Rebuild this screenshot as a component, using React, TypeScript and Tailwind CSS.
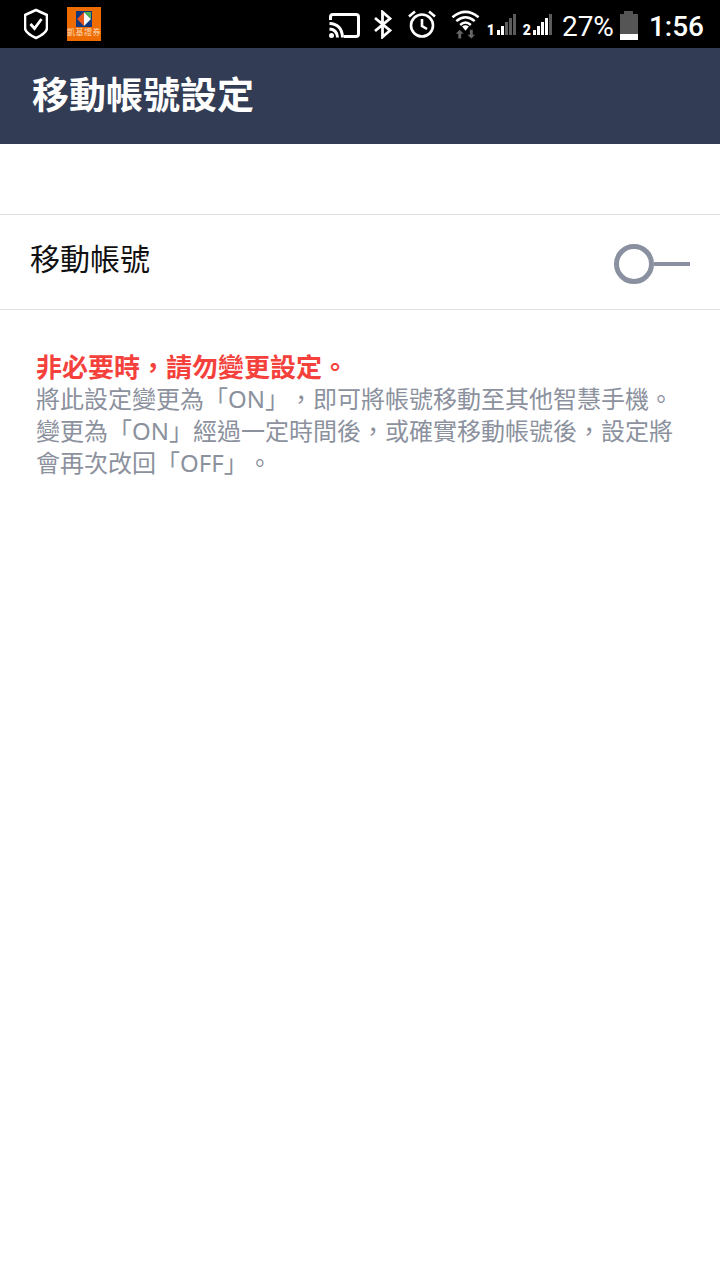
const cjk = 'font-["Roboto","Noto_Sans_CJK_TC",sans-serif] [text-spacing-trim:space-all]';

// Signal strength: digit plus a stepped wedge of thin bars
function Signal({ digit, lit }: { digit: string; lit: number }) {
  const bars = [5, 9, 13, 17, 21];
  return (
    <div className="flex h-[21px] items-end">
      <span className="mr-[2px] text-[14px] leading-[10px] font-black text-white font-['Roboto',sans-serif]">{digit}</span>
      <svg width="19" height="21" viewBox="0 0 19 21">
        {bars.map((h, i) => (
          <rect key={i} x={i * 4} y={21 - h} width="3" height={h} fill={i < lit ? '#ffffff' : '#5c5c5c'} />
        ))}
      </svg>
    </div>
  );
}

function StatusBar() {
  return (
    <div className="flex h-[48px] items-center justify-between bg-black pl-[24px] pr-[16px]">
      <div className="flex items-center gap-[19px]">
        <svg width="24" height="32" viewBox="0 0 24 32" fill="none" stroke="white" strokeWidth="2.6">
          <path d="M12 2 L23 7 V20 Q23 25 12 30 Q1 25 1 20 V7 Z" strokeLinejoin="round" />
          <path d="M6.5 16 L10.5 20.5 L17.5 11" strokeWidth="2.8" />
        </svg>
        <div className="flex h-[34px] w-[34px] flex-col items-center overflow-hidden bg-[#ee6c00] pt-[4px]">
          <svg width="16" height="16" viewBox="0 0 16 16">
            <rect width="16" height="16" fill="#14377d" />
            <path d="M8 1 L15 8 L8 15 Z" fill="#f5f5f5" />
            <path d="M8 1 L15 1 L15 8 Z" fill="#4caf50" />
            <path d="M1 8 L8 1 V15 Z" fill="#e8571c" />
          </svg>
          <span className={`${cjk} mt-[1px] text-[8px] leading-[10px] tracking-[0.5px] whitespace-nowrap text-[#ffd9b8]`}>凱基證券</span>
        </div>
      </div>
      <div className="flex items-center">
        <svg className="mt-[2px] mr-[14px]" width="31" height="25" viewBox="0 0 31 25" fill="none" stroke="white" strokeWidth="3">
          <path d="M1.500 7 V4 Q1.500 1.500 4 1.500 H27 Q29.500 1.500 29.500 4 V21 Q29.500 23.500 27 23.500 H15" />
          <path d="M0.500 10.500 Q13 11 13.500 24.500 M0.500 16 Q8 16.500 8.500 24.500" />
          <circle cx="2.500" cy="22.500" r="2.500" fill="white" stroke="none" />
        </svg>
        <svg className="mr-[15px]" width="18" height="29" viewBox="0 0 18 29" fill="none" stroke="white" strokeWidth="2.8">
          <path d="M1 8 L16 20.500 L8.500 27 V2 L16 8.500 L1 21" />
        </svg>
        <svg className="mr-[14px]" width="30" height="30" viewBox="0 0 30 30" fill="none" stroke="white" strokeWidth="2.6">
          <circle cx="15" cy="16.500" r="11" />
          <path d="M15 10 V17 L20 20" />
          <path d="M2 7.500 L8 2.500 M28 7.500 L22 2.500" />
        </svg>
        <svg className="mr-[7px]" width="29" height="30" viewBox="0 0 30 30" fill="none">
          <path d="M1.500 8 Q15 -3 28.500 8 M5.500 12 Q15 4 24.500 12 M9.500 16 Q15 11 20.500 16" stroke="white" strokeWidth="2.600" />
          <path d="M15 22 L11.500 17.500 Q15 15 18.500 17.500 Z" fill="white" />
          <path d="M9 21 L13 25 H10.500 V30 H7.500 V25 H5 Z" fill="#666666" />
          <path d="M21 30 L17 26 H19.500 V21 H22.500 V26 H25 Z" fill="#666666" />
        </svg>
        <div className="mr-[7px]"><Signal digit="1" lit={2} /></div>
        <Signal digit="2" lit={4} />
        <span className="mt-[6px] ml-[10px] text-[28px] leading-[32px] text-white font-['Roboto',sans-serif]">27%</span>
        <div className="mt-[2px] ml-[6px] flex h-[29px] w-[18px] flex-col">
          <div className="mx-auto h-[3px] w-[9px] bg-[#555555]" />
          <div className="flex-1 bg-[#555555]" />
          <div className="h-[6px] bg-white" />
        </div>
        <span className="mt-[6px] ml-[11px] text-[28px] leading-[32px] font-medium text-white font-['Roboto',sans-serif]">1:56</span>
      </div>
    </div>
  );
}

export default function App() {
  const notice = [
    '將此設定變更為「ON」，即可將帳號移動至其他智慧手機。',
    '變更為「ON」經過一定時間後，或確實移動帳號後，設定將',
    '會再次改回「OFF」。',
  ];

  return (
    <div className={`${cjk} flex h-[1280px] w-[720px] flex-col bg-white`}>
      <StatusBar />
      <div className="flex h-[96px] items-center bg-[#323c54] pt-[2px] pl-[32px]">
        <h1 className="text-[37px] leading-[48px] font-bold text-white">移動帳號設定</h1>
      </div>
      <div className="h-[70px]" />
      <div className="flex h-[96px] items-center justify-between border-y border-[#e0e0e0] px-[30px]">
        <span className="-mt-[4px] text-[30px] leading-[40px] text-[#111111]">移動帳號</span>
        <div className="mt-[4px] flex items-center">
          <div className="h-[40px] w-[40px] rounded-full border-[5px] border-[#8a90a0] bg-white" />
          <div className="h-[4px] w-[36px] bg-[#8a90a0]" />
        </div>
      </div>
      <div className="pt-[42px] pl-[36px] text-[24px] leading-[32px]">
        <p className="h-[31px] text-[26px] font-bold text-[#f5413c]">非必要時，請勿變更設定。</p>
        {notice.map((line, i) => (
          <p key={i} className={'font-["Noto_Sans","Noto_Sans_CJK_TC",sans-serif] whitespace-nowrap text-[#8c919e]'}>{line}</p>
        ))}
      </div>
    </div>
  );
}
